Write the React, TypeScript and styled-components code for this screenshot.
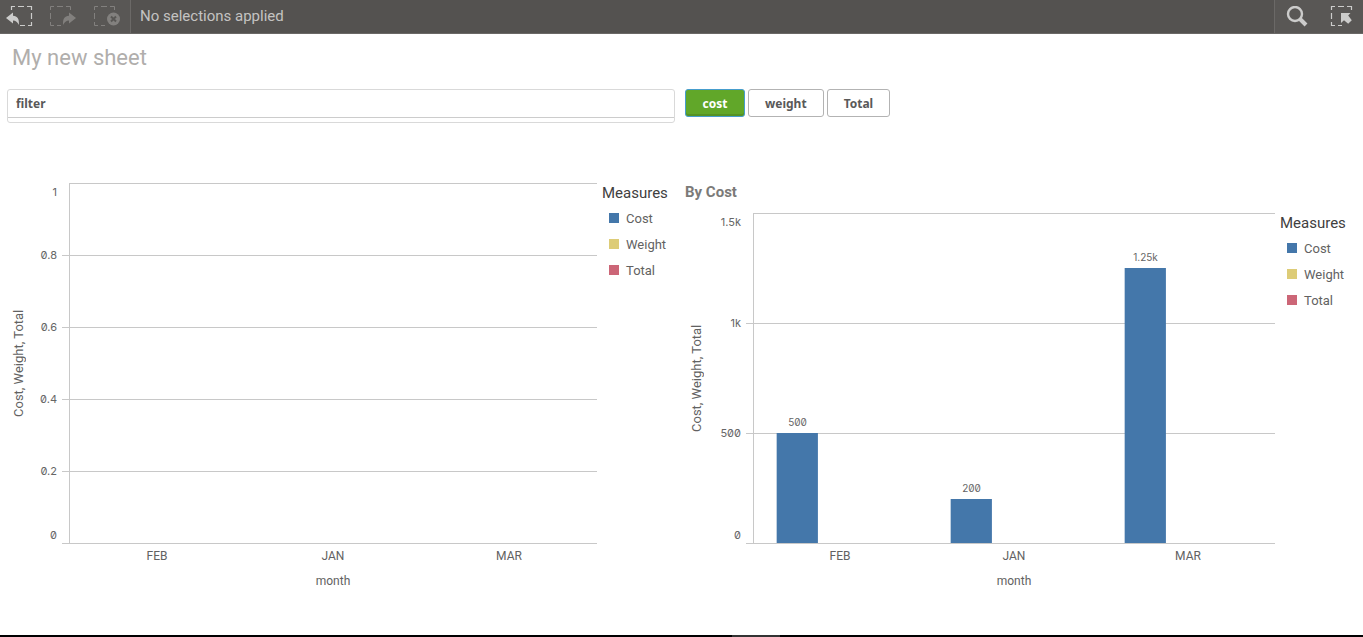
import React from 'react';
import styled, { createGlobalStyle } from 'styled-components';

const GlobalStyle = createGlobalStyle`
  *, *::before, *::after { box-sizing: border-box; }
  body {
    margin: 0;
    background: #fff;
    color: #626262;
    font-family: Roboto, "Liberation Sans", sans-serif;
    font-size: 13px;
  }
  button { font: inherit; cursor: pointer; }
`;

const Page = styled.div`
  display: flex;
  flex-direction: column;
  min-height: 100vh;
`;

const Toolbar = styled.header`
  display: flex;
  height: 34px;
  background: #545250;
  border-bottom: 1px solid #6a6866;
  color: #c4c3c2;
`;

const ToolGroup = styled.div<{ $side: 'left' | 'right' }>`
  display: flex;
  padding-left: ${p => (p.$side === 'left' ? '0' : '5px')};
  background: #595755;
  border: 0 solid #6b6967;
  border-width: ${p => (p.$side === 'left' ? '0 1px 0 0' : '0 0 0 1px')};
`;

const ToolButton = styled.button`
  display: flex;
  align-items: center;
  width: 44px;
  padding: 0 0 0 6px;
  border: 0;
  background: none;
  color: #cccccb;

  &:disabled { color: #82807e; }
  &:last-child { width: 42px; }
  ${ToolGroup} + p + ${ToolGroup} > &:last-child { width: 39px; }
`;

const SelectionStatus = styled.p`
  flex: 1;
  margin: 0;
  padding-left: 9px;
  font-size: 15px;
  line-height: 32px;
`;

const SheetTitle = styled.h1`
  margin: 0;
  padding: 8px 12px 15px;
  color: #b0aeac;
  font-size: 22px;
  font-weight: 400;
  line-height: 32px;
`;

const Columns = styled.div`
  display: grid;
  grid-template-columns: 1fr 1fr;
  column-gap: 10px;
  padding: 0 10px 0 7px;
`;

const ChartArea = styled(Columns)`
  flex: 1;
  padding-top: 60px;
  padding-bottom: 41px;
`;

const FilterPane = styled.div`
  height: 34px;
  border: 1px solid #d9d9d9;
  border-radius: 3px;
`;

const FilterButton = styled.button`
  display: block;
  width: 100%;
  height: 28px;
  padding: 0 8px;
  border: 0;
  border-bottom: 1px solid #ccc;
  background: none;
  color: #595959;
  font-family: "Noto Sans", sans-serif;
  font-size: 12px;
  font-weight: 700;
  text-align: left;
`;

const MeasureSwitch = styled.div`
  display: flex;
  align-items: flex-start;
  gap: 3px;
`;

const MeasureButton = styled.button<{ $active?: boolean }>`
  min-width: 60px;
  height: 28px;
  padding: 0 16px;
  border: 1px solid ${p => (p.$active ? '#469dcd' : '#b3b3b3')};
  border-radius: 3px;
  background: ${p => (p.$active ? '#61a729' : '#fff')};
  box-shadow: ${p => (p.$active ? 'inset 0 -2px 0 #559324' : 'none')};
  color: ${p => (p.$active ? '#fff' : '#595959')};
  font-family: "Noto Sans", sans-serif;
  font-size: 12px;
  font-weight: 700;
`;

const ChartPanel = styled.section`
  display: flex;
  flex-direction: column;
`;

const ChartTitle = styled.h2`
  height: 30px;
  margin: 0;
  color: #7b7a78;
  font-size: 15px;
  font-weight: 700;
  line-height: 18px;
`;

const ChartGrid = styled.div<{ $axis: number }>`
  display: grid;
  flex: 1;
  grid-template-columns: 22px ${p => p.$axis}px 1fr 78px;
  grid-template-rows: 1fr 25px 26px;
`;

const AxisName = styled.div`
  display: flex;
  align-items: center;
  justify-content: center;
  writing-mode: vertical-rl;
  transform: rotate(180deg);
  white-space: nowrap;
`;

const Drawing = styled.svg`
  display: block;
  width: 100%;
  height: 100%;
  min-height: 200px;
  overflow: visible;
  fill: #666;
  font-family: Inter, sans-serif;
  font-size: 11px;
  font-feature-settings: "zero";
`;

const Categories = styled.div`
  display: grid;
  grid-column: 3;
  grid-auto-columns: 1fr;
  grid-auto-flow: column;
  font-size: 12px;
  line-height: 26px;
  text-align: center;
`;

const Dimension = styled.div`
  grid-column: 3;
  font-size: 12px;
  line-height: 26px;
  text-align: center;
`;

const Legend = styled.div`
  padding-left: 5px;
`;

const LegendTitle = styled.h3`
  margin: 0 0 2px;
  color: #404040;
  font-size: 15px;
  font-weight: 400;
  line-height: 20px;
`;

const LegendList = styled.ul`
  margin: 0;
  padding: 0 0 0 7px;
  list-style: none;
`;

const LegendItem = styled.li<{ $color: string }>`
  display: flex;
  align-items: center;
  gap: 7px;
  height: 26px;

  &::before {
    content: '';
    width: 10px;
    height: 10px;
    background: ${p => p.$color};
  }
`;

const BottomEdge = styled.footer`
  display: flex;
  justify-content: center;
  height: 2px;
  padding-left: 149px;
  background: #000;

  &::before {
    content: '';
    width: 48px;
    background: #333;
  }
`;

const measures = [
  { name: 'Cost', color: '#4477aa' },
  { name: 'Weight', color: '#ddcc77' },
  { name: 'Total', color: '#cc6677' },
];
const months = ['FEB', 'JAN', 'MAR'];

interface ChartProps {
  title?: string;
  ticks: string[];
  axis: number;
  bars?: { value: number; label: string }[];
  max: number;
}

function BarChart({ title, ticks, axis, bars = [], max }: ChartProps) {
  const last = ticks.length - 1;
  return (
    <ChartPanel>
      {title && <ChartTitle>{title}</ChartTitle>}
      <ChartGrid $axis={axis}>
        <AxisName>Cost, Weight, Total</AxisName>
        <Drawing>
          {ticks.map((t, i) => (
            <text key={t} x={axis - 12} y={`${(i / last) * 100}%`} dy={i === 0 ? 13 : i === last ? -4 : 4} textAnchor="end">
              {t}
            </text>
          ))}
        </Drawing>
        <Drawing>
          <g fill="#c8c8c8" shapeRendering="crispEdges">
            {ticks.map((t, i) => (
              <g key={t}>
                <rect x="0" y={`${(i / last) * 100}%`} width="100%" height="1" />
                {i > 0 && <rect x="-7" y={`${(i / last) * 100}%`} width="7" height="1" />}
              </g>
            ))}
            <rect width="1" height="100%" />
          </g>
          {bars.map((b, i) => {
            const band = 100 / months.length;
            const x = band * (i + 0.136);
            const h = (b.value / max) * 100;
            return (
              <g key={b.label}>
                <rect x={`${x}%`} y={`${100 - h}%`} width={`${band * 0.237}%`} height={`${h}%`} fill="#4477aa" />
                <text x={`${x + band * 0.12}%`} y={`${100 - h}%`} dy="-7" textAnchor="middle" fontSize="10">
                  {b.label}
                </text>
              </g>
            );
          })}
        </Drawing>
        <Legend>
          <LegendTitle>Measures</LegendTitle>
          <LegendList>
            {measures.map(m => (
              <LegendItem key={m.name} $color={m.color}>{m.name}</LegendItem>
            ))}
          </LegendList>
        </Legend>
        <Categories>
          {months.map(m => <span key={m}>{m}</span>)}
        </Categories>
        <Dimension>month</Dimension>
      </ChartGrid>
    </ChartPanel>
  );
}

const BackIcon = () => (
  <svg width="28" height="22" viewBox="0 0 28 22" fill="currentColor" aria-hidden="true">
    <path d="M5.5 4V.5H9M12 .5h6M21 .5h4.500V4M25.500 7v6M25.500 16v3.500H22M19 19.500h-5" fill="none" stroke="currentColor" strokeWidth="1.2" />
    <path d="M0 12l7-5.500v3.200c4.500.3 6.500 3.300 5.800 9.300-1.300-3-3-4.300-5.800-4.500v3z" />
  </svg>
);

const ForwardIcon = () => (
  <svg width="28" height="22" viewBox="0 0 28 22" fill="currentColor" aria-hidden="true">
    <path d="M.5 4V.5H4M7 .5h6M16 .5h4.500V4M.5 7v6M.5 16v3.500H4M7 19.500h4" fill="none" stroke="currentColor" />
    <path d="M26 12l-7-5.500v3.200c-4.500.3-6.500 3.300-5.800 9.300 1.300-3 3-4.300 5.800-4.500v3z" />
  </svg>
);

const ClearIcon = () => (
  <svg width="28" height="22" viewBox="0 0 28 22" fill="currentColor" aria-hidden="true">
    <path d="M.5 4V.5H4M7 .5h6M16 .5h4.500V4M.5 7v6M.5 16v3.500H4M7 19.500h4" fill="none" stroke="currentColor" />
    <circle cx="19.500" cy="13" r="6.500" />
    <path d="M17 10.500l5 5m0-5l-5 5" stroke="#595755" strokeWidth="2" />
  </svg>
);

const SearchIcon = () => (
  <svg width="22" height="22" viewBox="0 0 22 22" fill="none" stroke="currentColor" aria-hidden="true">
    <circle cx="9" cy="8" r="7" strokeWidth="2.400" />
    <path d="M14 13l6 6" strokeWidth="4" />
  </svg>
);

const SelectionsIcon = () => (
  <svg width="24" height="22" viewBox="0 0 24 22" fill="currentColor" aria-hidden="true">
    <path d="M1.500 4V.5H5M8 .5h6M17 .5h4.500V4M1.500 7v6M1.500 16v3.500H5M8 19.500h4" fill="none" stroke="currentColor" strokeWidth="1.200" />
    <path d="M11 7h9.500l-2.300 2.600 3.600 4.600-3.600 3.600-4.200-3.600-3 2.800z" />
  </svg>
);

export default function App() {
  return (
    <Page>
      <GlobalStyle />
      <Toolbar>
        <ToolGroup $side="left">
          <ToolButton aria-label="Step back"><BackIcon /></ToolButton>
          <ToolButton aria-label="Step forward" disabled><ForwardIcon /></ToolButton>
          <ToolButton aria-label="Clear all selections" disabled><ClearIcon /></ToolButton>
        </ToolGroup>
        <SelectionStatus>No selections applied</SelectionStatus>
        <ToolGroup $side="right">
          <ToolButton aria-label="Search"><SearchIcon /></ToolButton>
          <ToolButton aria-label="Selections tool"><SelectionsIcon /></ToolButton>
        </ToolGroup>
      </Toolbar>
      <SheetTitle>My new sheet</SheetTitle>
      <Columns>
        <FilterPane><FilterButton>filter</FilterButton></FilterPane>
        <MeasureSwitch>
          <MeasureButton $active>cost</MeasureButton>
          <MeasureButton>weight</MeasureButton>
          <MeasureButton>Total</MeasureButton>
        </MeasureSwitch>
      </Columns>
      <ChartArea as="main">
        <BarChart ticks={['1', '0.8', '0.6', '0.4', '0.2', '0']} axis={40} max={1} />
        <BarChart
          title="By Cost"
          ticks={['1.5k', '1k', '500', '0']}
          axis={46}
          max={1500}
          bars={[{ value: 500, label: '500' }, { value: 200, label: '200' }, { value: 1250, label: '1.25k' }]}
        />
      </ChartArea>
      <BottomEdge />
    </Page>
  );
}
